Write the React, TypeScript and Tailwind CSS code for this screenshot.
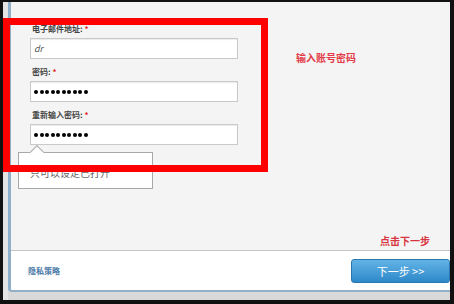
import React from "react";

const cjk = { fontFamily: '"Noto Sans CJK SC", "Liberation Sans", sans-serif' };

function Dots() {
  return (
    <div className="flex gap-[1.5px]">
      {Array.from({ length: 10 }).map((_, i) => (
        <span key={i} className="h-[4px] w-[4px] rounded-full bg-black" />
      ))}
    </div>
  );
}

function Field({ label, value, dots }: { label: string; value?: string; dots?: boolean }) {
  return (
    <div className="flex flex-col">
      <p className="h-[10px] pl-[2px] text-[8px] font-bold leading-[10px] text-[#444]">
        {label}
        <span className="ml-[2px] text-[#d22]">*</span>
      </p>
      <div className="mt-[4px] flex h-[21px] w-[208px] items-center border border-[#c9c9c9] bg-white px-[3px] shadow-[inset_0_1px_1px_rgba(0,0,0,0.08)]">
        {dots ? <Dots /> : <span className="text-[9px] italic text-[#555]">{value}</span>}
      </div>
    </div>
  );
}

export default function App() {
  return (
    <div className="h-[304px] w-[454px] bg-[#111] pb-[4px] pl-[3px] pr-[4px] pt-[2px]" style={cjk}>
      <div className="relative flex h-[298px] w-[447px] bg-[#d9d9d9]">
        <div className="w-[5px] bg-[#e4e4e4]" />
        <div className="flex h-[290px] flex-1 flex-col overflow-hidden rounded-bl-[4px] border-b-[2px] border-l-[3px] border-[#8fb0c8] bg-[#f4f4f4]">
          <div className="relative flex-1">
            <div className="flex flex-col gap-[8px] pl-[19px] pt-[22px]">
              <Field label="电子邮件地址:" value="dr" />
              <Field label="密码:" dots />
              <Field label="重新输入密码:" dots />
            </div>

            {/* tooltip */}
            <div className="absolute left-[7px] top-[150px] h-[37px] w-[135px] border border-[#a8a8a8] bg-white px-[11px] pt-[12px] text-[10px] text-[#666]">
              只可以设定已打开
              <div className="absolute -top-[6px] left-[13px] h-[10px] w-[10px] rotate-45 border-l border-t border-[#a8a8a8] bg-white" />
            </div>

            <p className="absolute left-[285px] top-[48px] text-[10px] font-bold text-[#e23a47]">输入账号密码</p>
            <p className="absolute left-[369px] top-[231px] text-[10px] font-bold text-[#d8343f]">点击下一步</p>
          </div>

          <div className="flex h-[40px] items-center justify-between border-t border-[#c4c4c4] bg-white pl-[17px]">
            <span className="text-[8px] font-bold text-[#4a7aa8]">隐私策略</span>
            <button className="mt-[1px] flex h-[24px] w-[99px] items-center justify-center rounded-[3px] border border-[#2b78b0] bg-gradient-to-b from-[#62b4e6] to-[#2c88c8] text-[11px] text-white">
              下一步 &gt;&gt;
            </button>
          </div>
        </div>

        {/* red annotation frame */}
        <div className="absolute left-0 top-[16px] h-[154px] w-[265px] border-[7px] border-[#ff0000]" />
      </div>
    </div>
  );
}
